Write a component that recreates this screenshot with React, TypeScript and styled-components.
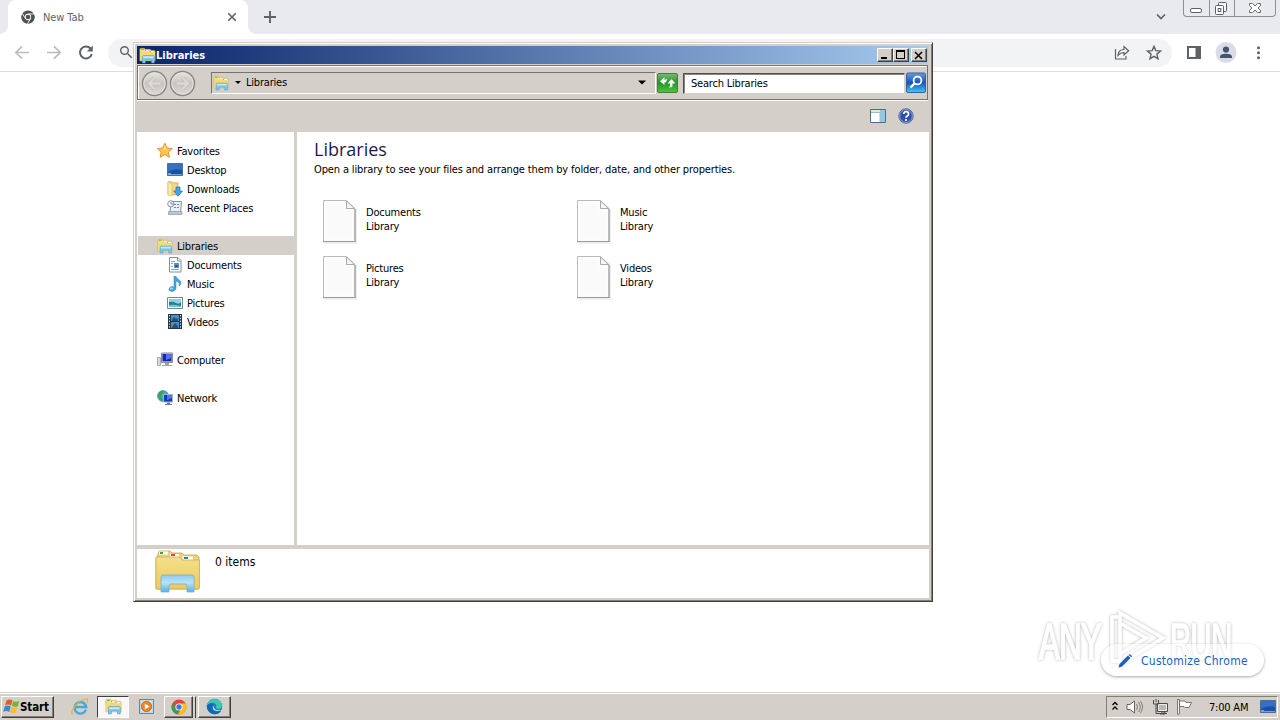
import styled, { createGlobalStyle, css } from "styled-components";

const GlobalStyle = createGlobalStyle`
  * {
    box-sizing: border-box;
  }
  body {
    margin: 0;
    overflow: hidden;
    background: white;
    font-family: "DejaVu Sans Condensed", "DejaVu Sans", "Liberation Sans", sans-serif;
    font-stretch: condensed;
    font-size: 11px;
    letter-spacing: -0.2px;
    color: #000;
  }
  svg {
    display: block;
    flex: none;
  }
`;

const face = "#d4cfc8";

const raised = css`
  border: 1px solid;
  border-color: #fff #404040 #404040 #fff;
  box-shadow: inset -1px -1px 0 #848078;
`;

const Screen = styled.div`
  position: relative;
  display: flex;
  flex-direction: column;
  width: 1280px;
  height: 720px;
  overflow: hidden;
`;

/* browser */

const TabStrip = styled.div`
  display: flex;
  height: 34px;
  background: #e8eaed;
`;
const TabFlare = styled.div<{ $side: "left" | "right" }>`
  align-self: flex-end;
  width: 8px;
  height: 8px;
  background: radial-gradient(circle at top ${(p) => p.$side}, transparent 7.5px, white 8px);
`;
const Tab = styled.div`
  display: flex;
  align-items: center;
  width: 240px;
  height: 34px;
  padding: 0 11px 0 13px;
  background: white;
  border-radius: 8px 8px 0 0;
`;
const TabTitle = styled.span`
  flex: 1;
  margin-left: 8px;
  color: #5f6368;
  letter-spacing: -0.1px;
`;
const NewTabButton = styled.div`
  display: flex;
  align-items: center;
  margin-left: 7px;
`;
const TabSearch = styled.div`
  display: flex;
  align-items: center;
  margin-left: auto;
  margin-right: 16px;
`;
const Caption = styled.div`
  display: flex;
  width: 93px;
  height: 17px;
  margin-right: 4px;
  border: 1px solid #8b9096;
  border-top: 0;
  border-radius: 0 0 4px 4px;
`;
const CaptionButton = styled.div<{ $width: number }>`
  display: flex;
  justify-content: center;
  width: ${(p) => p.$width}px;
  & + & {
    border-left: 1px solid #8b9096;
  }
`;
const BrowserBar = styled.div`
  display: flex;
  align-items: center;
  height: 38px;
  padding: 0 14px;
  border-bottom: 1px solid #dadce0;
`;
const NavIcons = styled.div`
  display: flex;
  gap: 16px;
  margin-right: 14px;
`;
const Omnibox = styled.div`
  display: flex;
  flex: 1;
  align-items: center;
  gap: 16px;
  height: 28px;
  padding: 0 10px 0 11px;
  background: #f1f3f4;
  border-radius: 14px;
`;
const Grow = styled.div`
  flex: 1;
`;
const BrowserActions = styled.div`
  display: flex;
  align-items: center;
  gap: 13px;
  margin-left: 14px;
`;
const BrowserPage = styled.div`
  flex: 1;
`;
const CustomizeButton = styled.div`
  position: absolute;
  left: 1101px;
  top: 644px;
  display: flex;
  align-items: center;
  gap: 8px;
  width: 163px;
  height: 32px;
  padding: 1px 0 0 16px;
  background: rgba(255, 255, 255, 0.45);
  border-radius: 16px;
  box-shadow: 0 1px 3px rgba(0, 0, 0, 0.35);
  color: #1a5fc4;
  font-size: 12px;
  letter-spacing: 0.28px;
  white-space: nowrap;
`;
const Watermark = styled.svg`
  position: absolute;
  left: 1030px;
  top: 602px;
`;

/* explorer window */

const Window = styled.div`
  position: absolute;
  left: 133px;
  top: 42px;
  display: flex;
  flex-direction: column;
  width: 800px;
  height: 560px;
  padding: 3px 3px 2px 3px;
  background: ${face};
  border: 1px solid;
  border-color: ${face} #404040 #404040 ${face};
  box-shadow: inset 1px 1px 0 #fff, inset -1px -1px 0 #848078;
`;
const TitleBar = styled.div`
  display: flex;
  align-items: center;
  height: 18px;
  margin-right: 1px;
  padding: 0 1px 0 2px;
  background: linear-gradient(to right, #0a246a, #a6caf0);
`;
const WindowTitle = styled.span`
  flex: 1;
  color: white;
  font-weight: bold;
  letter-spacing: 0;
`;
const TitleButton = styled.div<{ $gap?: number }>`
  ${raised}
  display: flex;
  align-items: center;
  justify-content: center;
  width: 16px;
  height: 14px;
  margin-left: ${(p) => p.$gap ?? 0}px;
  background: ${face};
`;
const AddressRow = styled.div`
  display: flex;
  align-items: center;
  height: 35px;
  margin: 1px 1px 0 0;
  padding: 0 0 0 2px;
  border: 1px solid #77736c;
  box-shadow: inset 1px 1px 0 #fff, 0 1px 0 #fff;
`;
const AddressBox = styled.div`
  display: flex;
  align-items: center;
  width: 445px;
  height: 22px;
  margin-left: 15px;
  padding: 0 9px 0 1px;
  border: 1px solid;
  border-color: #77736c #fff #fff #77736c;
`;
const AddressText = styled.span`
  flex: 1;
  margin-left: 1px;
`;
const SearchBox = styled.div`
  display: flex;
  align-items: center;
  width: 222px;
  height: 21px;
  margin: 1px 1px 0 5px;
  padding: 1px 0 0 7px;
  background: white;
  border: 1px solid;
  border-color: #504c48 ${face} ${face} #504c48;
  box-shadow: inset 1px 1px 0 #8a867f;
`;
const CommandBar = styled.div`
  display: flex;
  align-items: center;
  justify-content: flex-end;
  gap: 12px;
  height: 32px;
  padding-right: 15px;
`;
const Panes = styled.div`
  display: flex;
  height: 413px;
`;
const NavPane = styled.div`
  width: 157px;
  padding-top: 9px;
  background: white;
`;
const NavRow = styled.div<{ $child?: boolean; $selected?: boolean; $gap?: number }>`
  display: flex;
  align-items: center;
  height: 19px;
  margin-left: 1px;
  margin-top: ${(p) => p.$gap ?? 0}px;
  padding-left: ${(p) => (p.$child ? 29 : 19)}px;
  background: ${(p) => (p.$selected ? face : "transparent")};
`;
const NavIcon = styled.div`
  width: 20px;
`;
const NavLabel = styled.span`
  padding-top: 2px;
`;
const MainPane = styled.div`
  flex: 1;
  margin-left: 3px;
  padding: 6px 0 0 17px;
  background: white;
`;
const Heading = styled.div`
  height: 24px;
  line-height: 23px;
  color: #1c1c50;
  font-family: "Open Sans", "Noto Sans", sans-serif;
  font-stretch: normal;
  font-size: 18px;
  letter-spacing: 0;
`;
const Subheading = styled.div`
  height: 14px;
  margin-top: 1px;
  line-height: 14px;
  letter-spacing: -0.13px;
`;
const LibraryGrid = styled.div`
  display: grid;
  grid-template-columns: 254px 254px;
  grid-auto-rows: 56px;
  margin: 16px 0 0 3px;
`;
const LibraryItem = styled.div`
  display: flex;
  align-items: center;
  gap: 6px;
  padding-left: 3px;
`;
const LibraryText = styled.div`
  line-height: 14px;
  margin-top: -2px;
`;
const DetailsPane = styled.div`
  display: flex;
  height: 49px;
  margin-top: 4px;
  padding-left: 16px;
  background: white;
`;
const ItemCount = styled.div`
  margin: 6px 0 0 14px;
  font-size: 12px;
  letter-spacing: 0;
`;

/* taskbar */

const Taskbar = styled.div`
  display: flex;
  align-items: center;
  height: 28px;
  padding-left: 1px;
  background: ${face};
  border-top: 1px solid ${face};
  box-shadow: inset 0 1px 0 #fff;
`;
const StartButton = styled.div`
  ${raised}
  display: flex;
  align-items: center;
  width: 53px;
  height: 22px;
  margin-right: 9px;
  padding-left: 1px;
  background: ${face};
  font-weight: bold;
  font-size: 11.5px;
  letter-spacing: -0.1px;
`;
const TaskButton = styled.div<{ $state?: "raised" | "active"; $width?: number }>`
  display: flex;
  align-items: center;
  justify-content: center;
  width: ${(p) => p.$width ?? 34}px;
  height: 22px;
  ${(p) => p.$state === "raised" && raised}
  ${(p) =>
    p.$state === "active" &&
    css`
      background: #f8f7f5;
      border: 1px solid;
      border-color: #404040 #fff #fff #404040;
    `}
`;
const StackEdge = styled.div`
  width: 3px;
  height: 22px;
  margin-right: 2px;
  border-right: 1px solid #404040;
  border-top: 1px solid #fff;
`;
const Tray = styled.div`
  display: flex;
  align-items: center;
  width: 172px;
  height: 22px;
  margin-left: auto;
  margin-right: 2px;
  padding: 0 1px 0 4px;
  border: 1px solid;
  border-color: #848078 #fff #fff #848078;
`;
const Clock = styled.span`
  width: 51px;
  margin-left: 16px;
  padding-top: 1px;
  white-space: nowrap;
`;

/* icons */

const LibrariesIcon = ({ size = 16 }: { size?: number }) => (
  <svg width={size} height={size} viewBox="0 0 16 16">
    <path d="M.8 13V2.2l.8-1H5l.8 1h4.8l.7 1h3.2l.7 1V13z" fill="#f3df83" stroke="#c7a94b" strokeWidth=".5" />
    <path d="M2 1.8h2.6v.8H2z" fill="#55a84d" />
    <path d="M4.7 2.8h4v1h-4z" fill="#fff" />
    <path d="M9 4h5v1H9z" fill="#fff" />
    <path d="M5.5 2.8h1.2v.8H5.5z" fill="#dc604a" />
    <path d="M9.8 4H11v.8H9.8z" fill="#4483c5" />
    <path d="M1 5h7l1-1v1h6v8H1z" fill="#f1da72" />
    <path d="M3.2 15V8.8l.7-.7h9.8l.7.7V15h-2.6v-2.8H6V15z" fill="#80c8ee" stroke="#4594c6" strokeWidth=".5" />
    <path d="M3.8 8.8h10v1.6h-10z" fill="#c8eaf9" />
  </svg>
);

const LargeLibrariesIcon = () => (
  <svg width="48" height="46" viewBox="0 0 48 46">
    <defs>
      <linearGradient id="folder" x1="0" y1="0" x2="0" y2="1">
        <stop offset="0" stopColor="#f3e08c" />
        <stop offset="1" stopColor="#ecc95c" />
      </linearGradient>
      <linearGradient id="stand" x1="0" y1="0" x2="0" y2="1">
        <stop offset="0" stopColor="#8fc9ee" />
        <stop offset=".45" stopColor="#b9e3f6" />
        <stop offset="1" stopColor="#5aaee0" />
      </linearGradient>
    </defs>
    <path d="M4 9l2-7h11l2 2h10l2 2h13l2 2v32H3V9z" fill="#ead27a" stroke="#c3a14a" strokeWidth=".8" />
    <path d="M6 2.5h9v3H6zm11 2.5h9v3h-9z" fill="white" />
    <path d="M7 3h3v2H7z" fill="#4c9f43" />
    <path d="M18 5h4v2h-4z" fill="#d04d36" />
    <path d="M3 8h24l2 3h17.500v28l-2 1H4l-1-1z" fill="url(#folder)" stroke="#cdae51" strokeWidth=".8" />
    <path d="M29 7.500h11v3H30z" fill="white" />
    <path d="M31 8h4v2h-4z" fill="#347cbb" />
    <path
      d="M8 43V28q0-2 2-2h29q2 0 2 2v15h-7v-6q0-2-2-2H18q-2 0-2 2v6z"
      fill="url(#stand)"
      stroke="#6fb0d8"
      strokeWidth=".8"
    />
  </svg>
);

const StarIcon = () => (
  <svg width="16" height="16" viewBox="0 0 16 16">
    <path d="M7.8.2l2.2 4.8 5.3.6-4 3.5 1.1 5.3-4.600-2.900-4.700 2.800 1.1-5.300-4-3.500 5.500-.500z" fill="#ffc54c" stroke="#e99232" />
    <path d="M7.8 2.300L9 6.100l3 .3H4l2.5-.4z" fill="#ffe69a" />
  </svg>
);

const DesktopIcon = () => (
  <svg width="16" height="16" viewBox="0 0 16 16">
    <path d="M.5 1.5h15v12H.5z" fill="#1c50a7" stroke="#4c7095" />
    <path d="M1 2h14v6Q7 6 1 10z" fill="#3670c4" />
    <path d="M4 12h11v1H4z" fill="#7f9fc8" />
    <path d="M1 11h3v2H1z" fill="#67b1df" />
  </svg>
);

const DownloadsIcon = () => (
  <svg width="16" height="16" viewBox="0 0 16 16">
    <path d="M1 .8h4l1 1h5v12H1z" fill="#f2d878" stroke="#caa64b" strokeWidth=".7" />
    <path d="M1 1l4 2v12l-4-1z" fill="#f9e9a7" stroke="#d3b65c" strokeWidth=".5" />
    <path d="M9 6h4v4h2.5L11 15.2 6.8 10H9z" fill="#48a4e0" stroke="#1b70ae" strokeWidth=".7" />
  </svg>
);

const RecentIcon = () => (
  <svg width="16" height="16" viewBox="0 0 16 16">
    <path d="M4 1.5h10.5l-1 11H3z" fill="#e9eff2" stroke="#8194a0" />
    <path d="M7 4.5h5M7 7.5h5" stroke="#4a99a6" strokeDasharray="2 1" />
    <path d="M1.5 11.5h13.5v3H1.5z" fill="#bac7d0" stroke="#81919c" strokeWidth=".6" />
    <circle cx="3.8" cy="3.8" r="3.1" fill="#f5f7f8" stroke="#83929f" />
    <path d="M4 2v2h2" stroke="#60707c" fill="none" strokeWidth=".8" />
  </svg>
);

const DocumentIcon = () => (
  <svg width="16" height="16" viewBox="0 0 16 16">
    <path d="M2.500.5h8.500l3 3v11.500h-11.500z" fill="white" stroke="#7f9297" />
    <path d="M10.500 1v3h3" fill="none" stroke="#7f9297" />
    <path d="M4 4.5h4M4 6.5h2M4 9.5h2M4 12.5h8" stroke="#8ba4b2" />
    <path d="M7 6h5v5H7z" fill="#579ac8" />
    <path d="M8 8h3v2H8z" fill="#285e86" />
  </svg>
);

const MusicIcon = () => (
  <svg width="16" height="16" viewBox="0 0 16 16">
    <path
      d="M7 0h2c0 3 5 3 4.8 7.7-.2 1-1 2-1.8 2.3C13 7 11 5.6 9 5v7c0 4-7 4.500-7 1.300C2 11 5 10 7 11z"
      fill="#46a6e1"
      stroke="#267ebb"
      strokeWidth=".5"
    />
    <ellipse cx="4.6" cy="12.5" rx="1.6" ry="1" fill="#9bd7f7" />
  </svg>
);

const PictureIcon = () => (
  <svg width="16" height="16" viewBox="0 0 16 16">
    <path d="M.5 2.5h15v11H.5z" fill="#fff" stroke="#73898d" />
    <path d="M2 4h12v8H2z" fill="#8bd1ed" />
    <path d="M2 7q4-1 7 1t5-1v5H2z" fill="#267d8e" />
    <path d="M2 10q5-1 12 1v1H2z" fill="#79bdd2" />
  </svg>
);

const VideoIcon = () => (
  <svg width="16" height="16" viewBox="0 0 16 16">
    <path d="M1 0h14v15H1z" fill="#29333a" />
    <path d="M4 1h8v6H4zm0 7h8v6H4z" fill="#4590cb" />
    <path d="M5 6l2-3 2 2 2-1v3H5zm0 7l3-4 3 3v2H5z" fill="#235080" />
    <path d="M2.5 1v13M13.5 1v13" stroke="#d7e2e8" strokeDasharray="1.4 1.4" />
  </svg>
);

const ComputerIcon = () => (
  <svg width="17" height="16" viewBox="0 0 17 16">
    <path d="M.5 5.5h3v8h-3z" fill="#d7dadc" stroke="#8a8f92" strokeWidth=".7" />
    <path d="M4.5 1h11v9.5h-11z" fill="#c8cacf" stroke="#868b98" />
    <path d="M5.5 2h9v7.3h-9z" fill="#1526b2" />
    <path d="M9 2h5.5v4L9 8z" fill="#5172e0" />
    <path d="M8 11h4v2h3v1H5v-1h3z" fill="#a0a4a8" />
  </svg>
);

const NetworkIcon = () => (
  <svg width="17" height="16" viewBox="0 0 17 16">
    <circle cx="6" cy="6" r="5.5" fill="#54a4ce" stroke="#317b9d" strokeWidth=".6" />
    <path d="M2 3q2-3 5-2L5 4 4 7l3 3-2 1-4-4z" fill="#37a64c" />
    <path d="M6.5 4.5h9v7.5h-9z" fill="#1737bd" stroke="#a6b5c4" />
    <path d="M10 5h5v3l-5 2z" fill="#4e75e2" />
    <path d="M10 12.5h3V14h2v1H8v-1h2z" fill="#69808c" />
  </svg>
);

const FileIcon = () => (
  <svg width="40" height="48" viewBox="0 0 40 48">
    <path d="M3.5 46h32.5V12" fill="none" stroke="#eee" strokeWidth="2" />
    <path d="M3.5 3.5h23l8.500 8v33H3.500z" fill="#f9f9f9" stroke="#bbb" />
    <path d="M5 5h20v8h8v30H5z" fill="#fafafa" stroke="#fff" />
    <path d="M26.5 4v7.500h8z" fill="#f6f6f6" stroke="#aaa" />
    <path d="M35 12v33M3 44.5h32.500" stroke="#9a9a9a" fill="none" />
  </svg>
);

const CircleArrow = ({ forward }: { forward?: boolean }) => (
  <svg width="28" height="28" viewBox="0 0 28 28">
    <defs>
      <linearGradient id={forward ? "fwd" : "back"} x1="0" y1="0" x2="0" y2="1">
        <stop offset="0" stopColor="#e6e4e1" />
        <stop offset=".5" stopColor="#c9c6c1" />
        <stop offset="1" stopColor="#dcd9d5" />
      </linearGradient>
    </defs>
    <circle cx="14.5" cy="14.5" r="12" fill={`url(#${forward ? "fwd" : "back"})`} stroke="#8a8782" strokeWidth="1.4" />
    <circle cx="14.5" cy="14.5" r="10.7" fill="none" stroke="#e4e2df" />
    <path
      d={forward ? "M8.500 14.500h11M14.500 9l5.500 5.500-5.500 5.500" : "M20.500 14.500H9.500M14.500 9L9 14.500l5.500 5.500"}
      fill="none"
      stroke="#bcb9b4"
      strokeWidth="3.6"
    />
    <path
      d={forward ? "M8.500 14.500h11M14.500 9l5.500 5.500-5.500 5.500" : "M20.500 14.500H9.500M14.500 9L9 14.500l5.500 5.500"}
      fill="none"
      stroke="#dbd9d5"
      strokeWidth="2.4"
    />
  </svg>
);

const ChromeIcon = ({ mono, size }: { mono?: boolean; size: number }) => (
  <svg width={size} height={size} viewBox="0 0 16 16">
    <circle cx="8" cy="8" r="7.5" fill={mono ? "#4d5156" : "#e54335"} />
    <path d="M1.5 4.2L5 10l3 1.5L6.8 15.4A7.5 7.5 0 0 1 1.5 4.2z" fill={mono ? "#4d5156" : "#31a350"} />
    <path d="M8 4.5h6.6A7.5 7.5 0 0 1 6.8 15.4l3.6-5.8z" fill={mono ? "#4d5156" : "#fbc116"} />
    {mono && <path d="M8 4.5h7M5 9.8L1.5 4M11 9.7l-3.6 6" stroke="white" strokeWidth="1" />}
    <circle cx="8" cy="8" r="3.6" fill="white" />
    <circle cx="8" cy="8" r="2.7" fill={mono ? "#4d5156" : "#3b78e7"} />
  </svg>
);

const FlagIcon = () => (
  <svg width="17" height="16" viewBox="0 0 17 16">
    <path d="M1.5.5v15l2-.5V.5z" fill="#f0f0f0" stroke="#62605c" strokeWidth=".8" />
    <path d="M3.5 2H9l1 1.5h5.5L13 8.5H9L8 7.5H3.5z" fill="#fff" stroke="#5c5955" strokeWidth=".8" />
  </svg>
);

const Triangle = () => (
  <svg width="8" height="5" viewBox="0 0 8 5">
    <path d="M0 .5h8L4 4.5z" />
  </svg>
);

const navItems = [
  { label: "Favorites", icon: <StarIcon /> },
  { label: "Desktop", icon: <DesktopIcon />, child: true },
  { label: "Downloads", icon: <DownloadsIcon />, child: true },
  { label: "Recent Places", icon: <RecentIcon />, child: true },
  { label: "Libraries", icon: <LibrariesIcon />, gap: 19, selected: true },
  { label: "Documents", icon: <DocumentIcon />, child: true },
  { label: "Music", icon: <MusicIcon />, child: true },
  { label: "Pictures", icon: <PictureIcon />, child: true },
  { label: "Videos", icon: <VideoIcon />, child: true },
  { label: "Computer", icon: <ComputerIcon />, gap: 19 },
  { label: "Network", icon: <NetworkIcon />, gap: 19 },
];

const libraries = ["Documents", "Music", "Pictures", "Videos"];

function Browser() {
  return (
    <>
      <TabStrip>
        <TabFlare $side="left" />
        <Tab>
          <ChromeIcon mono size={14} />
          <TabTitle>New Tab</TabTitle>
          <svg width="10" height="10" viewBox="0 0 10 10">
            <path d="M1.2 1.2l7.6 7.6M8.8 1.2L1.2 8.8" stroke="#5f6368" strokeWidth="1.6" />
          </svg>
        </Tab>
        <TabFlare $side="right" />
        <NewTabButton>
          <svg width="14" height="14" viewBox="0 0 14 14">
            <path d="M7 1v12M1 7h12" stroke="#5f6368" strokeWidth="1.9" />
          </svg>
        </NewTabButton>
        <TabSearch>
          <svg width="12" height="10" viewBox="0 0 12 10">
            <path d="M2 2.5l4 4 4-4" fill="none" stroke="#5f6368" strokeWidth="1.7" />
          </svg>
        </TabSearch>
        <Caption>
          <CaptionButton $width={25}>
            <svg width="14" height="16" viewBox="0 0 14 16">
              <rect x=".5" y="8.5" width="11" height="4" rx="1.5" fill="white" stroke="#596067" />
            </svg>
          </CaptionButton>
          <CaptionButton $width={25}>
            <svg width="16" height="16" viewBox="0 0 16 16">
              <rect x="4.5" y="2.5" width="8" height="9" rx="1" fill="#f5f6f7" stroke="#596067" />
              <rect x="1.5" y="5.5" width="8" height="9" rx="1" fill="white" stroke="#596067" />
              <rect x="4.2" y="8.5" width="2.6" height="3" fill="white" stroke="#596067" />
            </svg>
          </CaptionButton>
          <CaptionButton $width={41}>
            <svg width="14" height="16" viewBox="0 0 14 16">
              <path
                d="M1.5 3.5h3L7 6l2.5-2.5h3v2L10 8l2.5 2.5v2h-3L7 10l-2.5 2.5h-3v-2L4 8 1.5 5.5z"
                fill="white"
                stroke="#596067"
                strokeWidth=".9"
              />
            </svg>
          </CaptionButton>
        </Caption>
      </TabStrip>
      <BrowserBar>
        <NavIcons>
          <svg width="16" height="16" viewBox="0 0 16 16">
            <path d="M15 7.5H2.5M8 1.3L1.8 7.5 8 13.7" fill="none" stroke="#babcbe" strokeWidth="1.7" />
          </svg>
          <svg width="16" height="16" viewBox="0 0 16 16">
            <path d="M1 7.5h12.5M8 1.3l6.2 6.2L8 13.7" fill="none" stroke="#babcbe" strokeWidth="1.7" />
          </svg>
          <svg width="16" height="16" viewBox="0 0 16 16">
            <path d="M13.8 9A6 6 0 1 1 12.5 3.5l1 1" fill="none" stroke="#5f6368" strokeWidth="2" />
            <path d="M14.8.5v6h-6z" fill="#5f6368" />
          </svg>
        </NavIcons>
        <Omnibox>
          <svg width="14" height="16" viewBox="0 0 14 16">
            <circle cx="5.5" cy="5.5" r="3.8" fill="none" stroke="#5f6368" strokeWidth="1.4" />
            <path d="M8.5 8.5l4.2 4.2" stroke="#5f6368" strokeWidth="1.5" />
          </svg>
          <Grow />
          <svg width="16" height="16" viewBox="0 0 16 16">
            <path d="M1.5 4v10h10.5V11" fill="none" stroke="#5f6368" strokeWidth="1.2" />
            <path
              d="M4 10.3c.4-4 2.5-5.8 6-5.8V1.5l4.7 4.3L10 10V7.5C7.5 7.4 5.8 8.3 4 10.3z"
              fill="none"
              stroke="#5f6368"
              strokeWidth="1.2"
            />
          </svg>
          <svg width="16" height="16" viewBox="0 0 16 16">
            <path
              d="M8 1.3l1.8 4.3 4.7.4-3.6 3.1 1.1 4.6L8 11.3l-4 2.4 1.1-4.6L1.5 6l4.7-.4z"
              fill="none"
              stroke="#5f6368"
              strokeWidth="1.4"
            />
          </svg>
        </Omnibox>
        <BrowserActions>
          <svg width="16" height="16" viewBox="0 0 16 16">
            <path d="M1 1h14v13H1z" fill="#5f6368" />
            <path d="M3 3h6.5v9H3z" fill="white" />
          </svg>
          <svg width="22" height="22" viewBox="0 0 22 22">
            <circle cx="11" cy="10.5" r="10.5" fill="#dadde5" />
            <circle cx="11" cy="7.5" r="3.1" fill="#48536e" />
            <path d="M5 16v-1.3q0-3 6-3t6 3V16z" fill="#48536e" />
          </svg>
          <svg width="16" height="16" viewBox="0 0 16 16">
            <circle cx="8.5" cy="2.7" r="1.5" fill="#5f6368" />
            <circle cx="8.5" cy="7.7" r="1.5" fill="#5f6368" />
            <circle cx="8.5" cy="12.7" r="1.5" fill="#5f6368" />
          </svg>
        </BrowserActions>
      </BrowserBar>
      <BrowserPage />
      <Watermark width="220" height="76" viewBox="0 0 220 76">
        <defs>
          <filter id="halo" x="-10%" y="-10%" width="120%" height="120%">
            <feDropShadow dx="0" dy="0" stdDeviation="1.6" floodColor="#555" floodOpacity=".6" />
          </filter>
        </defs>
        <g filter="url(#halo)" opacity=".8">
          <g fill="white" stroke="white" fontFamily="Liberation Sans, sans-serif" fontSize="31" letterSpacing="-.5">
            <text transform="translate(9 57) scale(1 1.6)">ANY</text>
            <text transform="translate(140 57) scale(.94 1.6)">RUN</text>
          </g>
          <path
            d="M90 22V11l43 25-43 26V52l26-16-26-15v31M88 15h-6v44h6"
            fill="none"
            stroke="white"
            strokeWidth="3.4"
          />
        </g>
      </Watermark>
      <CustomizeButton>
        <svg width="16" height="16" viewBox="0 0 16 16">
          <path d="M1.5 14.5l1-3.5L11 2.5l2.5 2.5L5 13.5z" fill="#1b5ebd" />
          <path d="M11.8 1.9l1-1 2.4 2.4-1 1z" fill="#1b5ebd" />
        </svg>
        Customize Chrome
      </CustomizeButton>
    </>
  );
}

function Explorer() {
  return (
    <Window>
      <TitleBar>
        <LibrariesIcon size={17} />
        <WindowTitle>Libraries</WindowTitle>
        <TitleButton>
          <svg width="10" height="9" viewBox="0 0 10 9">
            <path d="M1 6h6v2H1z" />
          </svg>
        </TitleButton>
        <TitleButton>
          <svg width="10" height="10" viewBox="0 0 10 10">
            <path d="M0 0h9v9H0zM1 2v6h7V2z" fillRule="evenodd" />
          </svg>
        </TitleButton>
        <TitleButton $gap={2}>
          <svg width="10" height="9" viewBox="0 0 10 9">
            <path d="M1 1l7 7M8 1L1 8" stroke="black" strokeWidth="1.6" />
          </svg>
        </TitleButton>
      </TitleBar>
      <AddressRow>
        <CircleArrow />
        <CircleArrow forward />
        <AddressBox>
          <LibrariesIcon />
          <svg width="16" height="5" viewBox="0 0 16 5">
            <path d="M6 1h6L9 4z" />
          </svg>
          <AddressText>Libraries</AddressText>
          <Triangle />
        </AddressBox>
        <svg width="22" height="21" viewBox="0 0 22 21">
          <defs>
            <linearGradient id="refresh" x1="0" y1="0" x2="0" y2="1">
              <stop offset="0" stopColor="#78bb70" />
              <stop offset=".5" stopColor="#269329" />
              <stop offset="1" stopColor="#4fc83a" />
            </linearGradient>
          </defs>
          <rect x="1.5" y="1.5" width="20" height="19" rx="1.5" fill="url(#refresh)" stroke="#477b45" />
          <path
            d="M4 9.5L8.5 5v3l3-1.5L10 10.5H8.500V13zM19.5 11.5L15.5 7l-4 4.5H14V14l-1 2 3.500-1.500V11.5z"
            fill="#eff9ed"
          />
        </svg>
        <SearchBox>Search Libraries</SearchBox>
        <svg width="21" height="21" viewBox="0 0 21 21">
          <defs>
            <linearGradient id="search" x1="0" y1="0" x2="0" y2="1">
              <stop offset="0" stopColor="#6c9bda" />
              <stop offset=".5" stopColor="#1755bd" />
              <stop offset="1" stopColor="#42cbf2" />
            </linearGradient>
          </defs>
          <rect x=".5" y="1" width="19" height="19.5" rx="1.5" fill="url(#search)" stroke="#33609f" />
          <circle cx="11.5" cy="8.5" r="3.9" fill="none" stroke="white" strokeWidth="1.8" />
          <path d="M8.5 11.5l-4 4" stroke="white" strokeWidth="2.4" />
        </svg>
      </AddressRow>
      <CommandBar>
        <svg width="16" height="16" viewBox="0 0 16 16">
          <path d="M.5 1.5h15v13H.5z" fill="white" stroke="#526c86" />
          <path d="M1 2h14v2H1z" fill="#dce7ee" />
          <path d="M10 2h5v12h-5z" fill="#8fcbe6" />
          <path d="M1 4.5h9V14" fill="none" stroke="#a7b8c6" />
        </svg>
        <svg width="16" height="16" viewBox="0 0 16 16">
          <circle cx="8" cy="8" r="7.2" fill="#304fab" stroke="#576a9f" />
          <circle cx="8" cy="8" r="6.3" fill="none" stroke="#b0bfe5" strokeWidth=".7" />
          <path
            d="M5.7 6q0-2.3 2.4-2.3T10.6 6q0 1.2-1.4 2Q8 8.7 8 9.8M8 11v2"
            fill="none"
            stroke="white"
            strokeWidth="1.7"
          />
        </svg>
      </CommandBar>
      <Panes>
        <NavPane>
          {navItems.map((item) => (
            <NavRow key={item.label} $child={item.child} $selected={item.selected} $gap={item.gap}>
              <NavIcon>{item.icon}</NavIcon>
              <NavLabel>{item.label}</NavLabel>
            </NavRow>
          ))}
        </NavPane>
        <MainPane>
          <Heading>Libraries</Heading>
          <Subheading>
            Open a library to see your files and arrange them by folder, date, and other properties.
          </Subheading>
          <LibraryGrid>
            {libraries.map((name) => (
              <LibraryItem key={name}>
                <FileIcon />
                <LibraryText>
                  {name}
                  <br />
                  Library
                </LibraryText>
              </LibraryItem>
            ))}
          </LibraryGrid>
        </MainPane>
      </Panes>
      <DetailsPane>
        <LargeLibrariesIcon />
        <ItemCount>0 items</ItemCount>
      </DetailsPane>
    </Window>
  );
}

function SystemTaskbar() {
  return (
    <Taskbar>
      <StartButton>
        <svg width="17" height="16" viewBox="0 0 17 16">
          <path d="M3.500 1.500q3-2 6 0L8 6.500q-3-2-6 0z" fill="#e85a2a" />
          <path d="M10.300 2q3 1.500 6 0L14.800 7.200q-3 1.500-6-.5z" fill="#70b63a" />
          <path d="M1.700 7.500q3-2 6 0l-1.500 5.500q-3-2-6 0z" fill="#388bd2" />
          <path d="M8.500 8q3 1.500 6 0L13 13.500q-3 1.500-6 0z" fill="#f7bd2e" />
        </svg>
        Start
      </StartButton>
      <TaskButton>
        <svg width="18" height="18" viewBox="0 0 18 18">
          <path d="M15 11.5A5.8 5.8 0 1 1 15.2 9H5" fill="none" stroke="#49a6dc" strokeWidth="2.4" />
          <path d="M2 15Q0 17 1 13 5 4 14 1q4-1 2 4" fill="none" stroke="#e3b342" strokeWidth="1.2" />
        </svg>
      </TaskButton>
      <TaskButton $state="active" $width={32}>
        <LibrariesIcon size={17} />
      </TaskButton>
      <TaskButton $width={35}>
        <svg width="17" height="17" viewBox="0 0 17 17">
          <path d="M1.5 1.5h14v14h-14z" fill="#b7dcf2" stroke="#4b8fbe" />
          <path d="M3.5 3.5h10v10h-10z" fill="#dceefa" />
          <circle cx="8.5" cy="8.5" r="5.2" fill="#ef8426" stroke="#d26d1c" />
          <path d="M6.8 5.5v6l4.7-3z" fill="white" />
        </svg>
      </TaskButton>
      <TaskButton $state="raised" $width={29}>
        <ChromeIcon size={16} />
      </TaskButton>
      <StackEdge />
      <TaskButton $state="raised" $width={33}>
        <svg width="17" height="17" viewBox="0 0 17 17">
          <circle cx="8.5" cy="8.5" r="7.8" fill="#1b80cf" />
          <path d="M1 8C2 1 8 0 12 2s5 6 3 8-5 1-5-1c2-2-2-5-5-4-2 .5-3.5 1.5-4 3z" fill="#42c7ac" />
          <path d="M6 9q0 6 9 4-3 4-8 3Q1 14 1 8q2-4 7-2-2 1-2 3z" fill="#1467b2" />
          <path d="M8 8q-1 5 7 4-3 2-7 0-2-2 0-4z" fill="#d9edf3" />
        </svg>
      </TaskButton>
      <Tray>
        <svg width="8" height="14" viewBox="0 0 8 14">
          <path d="M1.5 5L4 2.5 6.5 5M1.5 9.5L4 7l2.5 2.5" fill="none" stroke="black" strokeWidth="1.3" />
        </svg>
        <Grow />
        <svg width="18" height="16" viewBox="0 0 18 16">
          <path d="M1 5.5h3L8.5 2v12L4 10.5H1z" fill="white" stroke="#686560" />
          <path
            d="M10.5 5q2 3 0 6M12.5 3q3.5 5 0 10M14.5 2q4 6 0 12"
            fill="none"
            stroke="#777"
            strokeWidth=".9"
          />
        </svg>
        <Grow />
        <svg width="17" height="16" viewBox="0 0 17 16">
          <path d="M5.5 4.5h10v8h-10z" fill="#b8b8b5" stroke="#504e49" />
          <path d="M6.5 5.5h8v6h-8z" fill="none" stroke="#eee" />
          <path d="M1.5 1v4h5V1M4 0v3M4 5v9.5h11M9 13h4v2H8" fill="none" stroke="#4d4a46" />
        </svg>
        <Grow />
        <FlagIcon />
        <Clock>7:00 AM</Clock>
        <DesktopIcon />
      </Tray>
    </Taskbar>
  );
}

export default function App() {
  return (
    <Screen>
      <GlobalStyle />
      <Browser />
      <Explorer />
      <SystemTaskbar />
    </Screen>
  );
}
